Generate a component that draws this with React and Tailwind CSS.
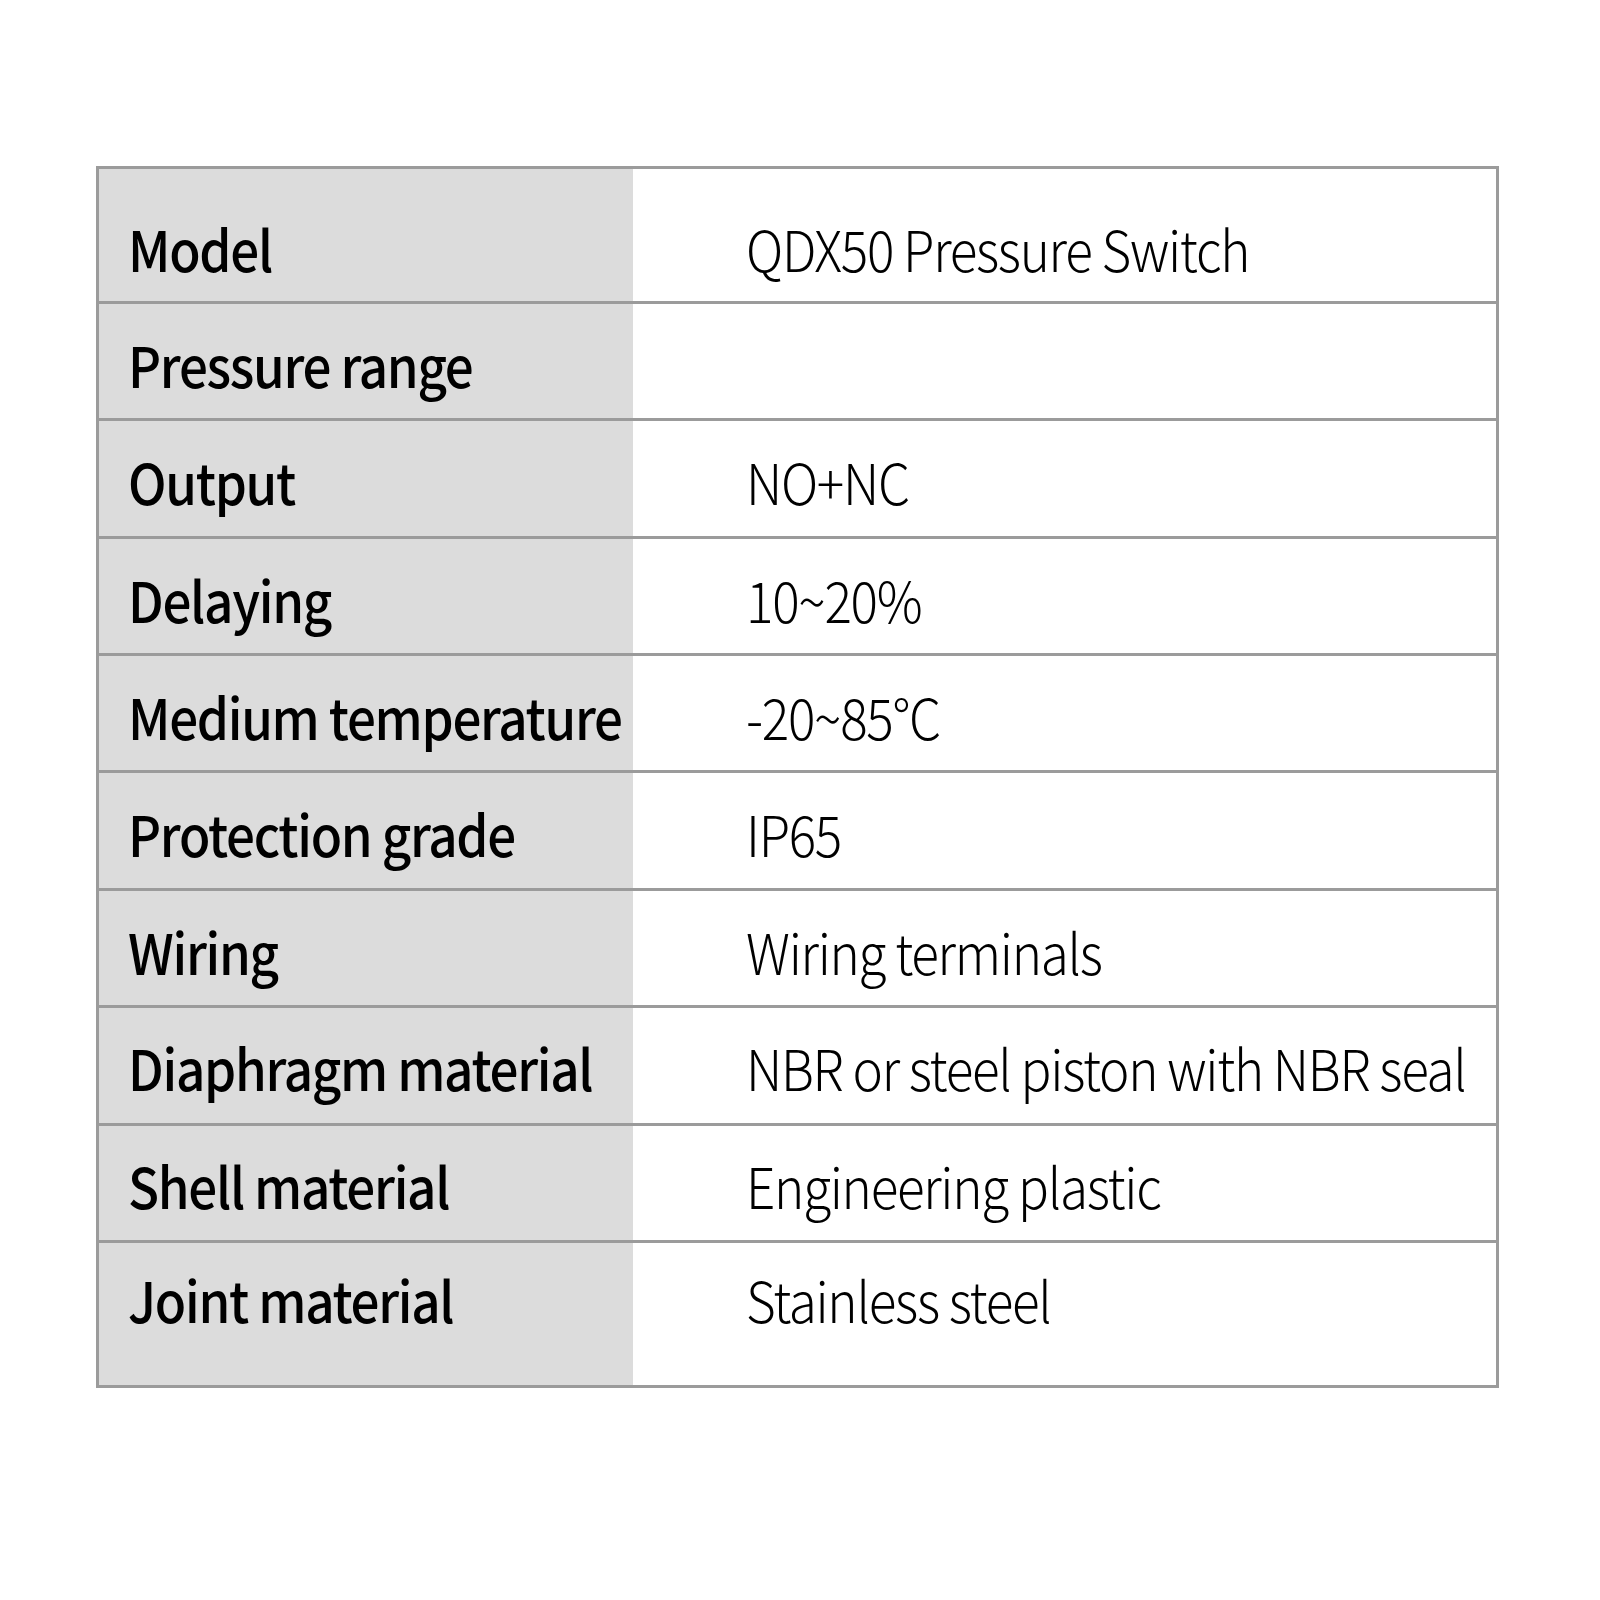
import React from 'react'

const rows = [
  { label: 'Model', value: 'QDX50 Pressure Switch', h: 'h-[132px]', pt: 'pt-[51px]' },
  { label: 'Pressure range', value: '', h: 'h-[117px]', pt: 'pt-[32px]' },
  { label: 'Output', value: 'NO+NC', h: 'h-[118px]', pt: 'pt-[32px]' },
  { label: 'Delaying', value: '10~20%', h: 'h-[117px]', pt: 'pt-[32px]' },
  { label: 'Medium temperature', value: '-20~85°C', h: 'h-[117px]', pt: 'pt-[32px]' },
  { label: 'Protection grade', value: 'IP65', h: 'h-[118px]', pt: 'pt-[32px]' },
  { label: 'Wiring', value: 'Wiring terminals', h: 'h-[117px]', pt: 'pt-[32px]' },
  { label: 'Diaphragm material', value: 'NBR or steel piston with NBR seal', h: 'h-[118px]', pt: 'pt-[31px]' },
  { label: 'Shell material', value: 'Engineering plastic', h: 'h-[117px]', pt: 'pt-[31px]' },
  { label: 'Joint material', value: 'Stainless steel', h: 'h-[145px]', pt: 'pt-[28px]' },
]

export default function App() {
  return (
    <div className="w-[1600px] h-[1600px] bg-white pt-[166px] pl-[96px]" style={{ fontFamily: '"Noto Sans CJK SC", "Noto Sans", sans-serif' }}>
      <div className="w-[1403px] border-[3px] border-[#9b9b9b] text-black">
        {rows.map((row, i) => (
          <div key={row.label} className={`flex ${row.h} ${i > 0 ? 'border-t-[3px] border-[#9b9b9b]' : ''}`}>
            <div className={`w-[534px] shrink-0 bg-[#dcdcdc] flex items-start pl-[29px] ${row.pt}`}>
              <span className="text-[56px] font-medium leading-none tracking-[-1.4px] whitespace-nowrap scale-x-[0.913] origin-left">{row.label}</span>
            </div>
            <div className={`flex-1 flex items-start pl-[113px] ${row.pt}`}>
              <span className="text-[56px] font-light leading-none tracking-[-1.4px] whitespace-nowrap scale-x-[0.915] origin-left">{row.value}</span>
            </div>
          </div>
        ))}
      </div>
    </div>
  )
}
